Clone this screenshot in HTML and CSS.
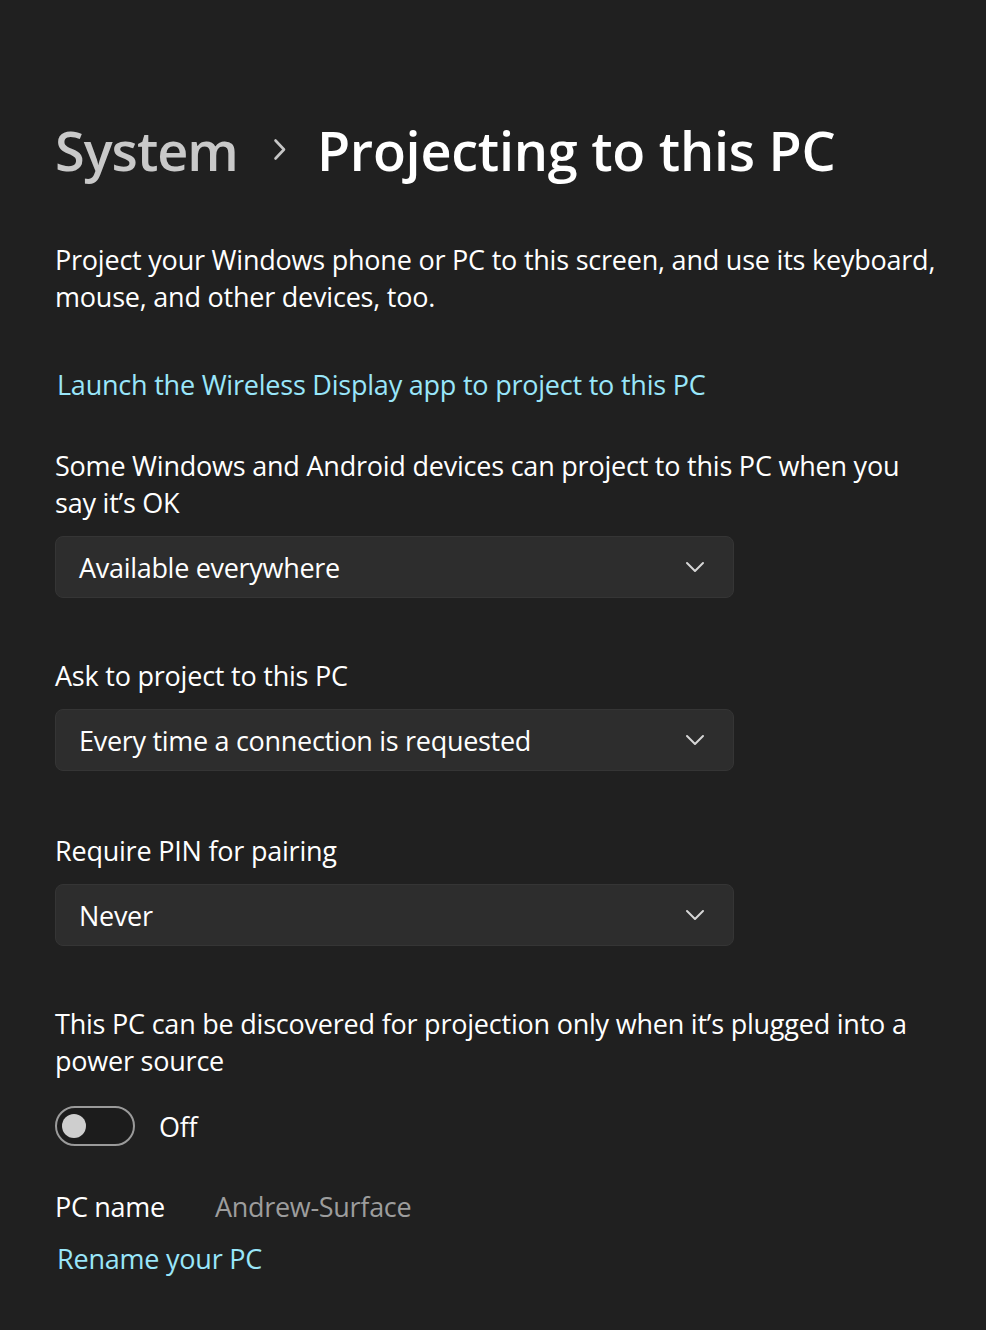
FILE: index.html
```html
<!DOCTYPE html>
<html lang="en">
<head>
<meta charset="utf-8">
<title>Projecting to this PC</title>
<link rel="stylesheet" href="styles.css">
</head>
<body>
<main class="page">
  <header class="breadcrumb">
    <span class="crumb-parent">System</span>
    <svg class="crumb-sep" width="16" height="24" viewBox="0 0 16 24"><path d="M3.5 2.5 L12 11.5 L3.5 20.5" fill="none" stroke="#c6c6c6" stroke-width="2.6" stroke-linecap="round" stroke-linejoin="round"/></svg>
    <h1 class="crumb-current">Projecting to this PC</h1>
  </header>

  <p class="desc">Project your Windows phone or PC to this screen, and use its keyboard, mouse, and other devices, too.</p>

  <a class="link launch" href="#">Launch the Wireless Display app to project to this PC</a>

  <section class="setting first">
    <p class="label">Some Windows and Android devices can project to this PC when you say it’s OK</p>
    <div class="dropdown"><span>Available everywhere</span><svg class="chev" width="20" height="12" viewBox="0 0 20 12"><path d="M2 2 L10 10 L18 2" fill="none" stroke="#d6d6d6" stroke-width="2" stroke-linecap="round" stroke-linejoin="round"/></svg></div>
  </section>

  <section class="setting">
    <p class="label">Ask to project to this PC</p>
    <div class="dropdown"><span>Every time a connection is requested</span><svg class="chev" width="20" height="12" viewBox="0 0 20 12"><path d="M2 2 L10 10 L18 2" fill="none" stroke="#d6d6d6" stroke-width="2" stroke-linecap="round" stroke-linejoin="round"/></svg></div>
  </section>

  <section class="setting third">
    <p class="label">Require PIN for pairing</p>
    <div class="dropdown"><span>Never</span><svg class="chev" width="20" height="12" viewBox="0 0 20 12"><path d="M2 2 L10 10 L18 2" fill="none" stroke="#d6d6d6" stroke-width="2" stroke-linecap="round" stroke-linejoin="round"/></svg></div>
  </section>

  <section class="setting last">
    <p class="label">This PC can be discovered for projection only when it’s plugged into a power source</p>
    <div class="toggle-row">
      <span class="toggle"><span class="knob"></span></span>
      <span class="toggle-text">Off</span>
    </div>
  </section>

  <div class="name-row">
    <span class="name-label">PC name</span>
    <span class="name-value">Andrew-Surface</span>
  </div>
  <a class="link rename" href="#">Rename your PC</a>
</main>
</body>
</html>
```

FILE: styles.css
```css
html, body {
  margin: 0;
  padding: 0;
  background: #202020;
}
body {
  font-family: "Open Sans", "Noto Sans", sans-serif;
  color: #ffffff;
  width: 986px;
  height: 1330px;
  overflow: hidden;
}
.page {
  padding: 112px 40px 0 55px;
}
.breadcrumb {
  display: flex;
  align-items: center;
  height: 76px;
}
.crumb-parent {
  font-size: 54px;
  font-weight: 600;
  color: #c9c9c9;
  letter-spacing: -1px;
}
.crumb-sep {
  margin: 0 29px 0 34px;
}
.crumb-current {
  margin: 0;
  font-size: 54px;
  font-weight: 600;
  color: #ffffff;
  letter-spacing: -0.25px;
}
.desc {
  margin: 53px 0 0;
  font-size: 27px;
  line-height: 37px;
  letter-spacing: -0.22px;
}
.link {
  display: block;
  color: #99e6fa;
  text-decoration: none;
  font-size: 27px;
  line-height: 37px;
  letter-spacing: -0.22px;
}
.launch {
  margin: 51px 0 0 2px;
}
.setting {
  margin-top: 59px;
}
.setting.first {
  margin-top: 44px;
}
.setting.third {
  margin-top: 61px;
}
.setting.last {
  margin-top: 59px;
}
.label {
  margin: 0;
  font-size: 27px;
  line-height: 37px;
  letter-spacing: -0.22px;
}
.dropdown {
  margin-top: 15px;
  width: 679px;
  height: 62px;
  box-sizing: border-box;
  background: #2d2d2d;
  border: 1px solid #353535;
  border-radius: 8px;
  display: flex;
  align-items: center;
  justify-content: space-between;
  padding: 0 28px 0 23px;
  font-size: 27px;
  letter-spacing: -0.3px;
}
.toggle-row {
  margin-top: 27px;
  display: flex;
  align-items: center;
  gap: 24px;
}
.toggle {
  width: 80px;
  height: 40px;
  box-sizing: border-box;
  border: 2px solid #9a9a9a;
  border-radius: 20px;
  background: #1c1c1c;
  display: flex;
  align-items: center;
  padding-left: 5px;
}
.knob {
  width: 24px;
  height: 24px;
  border-radius: 50%;
  background: #cecece;
}
.toggle-text {
  font-size: 27px;
  letter-spacing: -0.3px;
}
.name-row {
  margin-top: 42px;
  display: flex;
  font-size: 27px;
  line-height: 37px;
  letter-spacing: -0.3px;
}
.name-label {
  width: 160px;
}
.name-value {
  color: #9d9d9d;
}
.rename {
  margin: 15px 0 0 2px;
}
```
